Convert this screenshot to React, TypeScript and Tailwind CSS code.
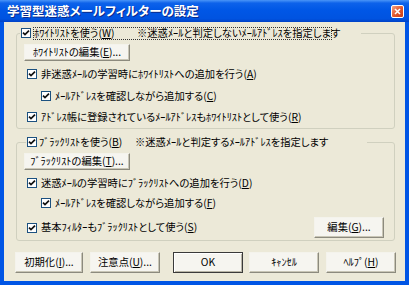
import type { ReactNode } from 'react';

function Check() {
  return (
    <span className="flex h-[10px] w-[10px] shrink-0 items-center justify-center border border-[#1c5180] bg-white">
      <svg viewBox="0 0 8 8" className="h-[8px] w-[8px]">
        <path d="M1 3.6 L3 5.6 L7 1.6" stroke="#111" strokeWidth="1.7" fill="none" />
      </svg>
    </span>
  );
}

function Row({ indent, children }: { indent: string; children: ReactNode }) {
  return (
    <div className={`flex h-[14px] items-center ${indent}`}>
      <Check />
      <span className="ml-[4px] whitespace-nowrap">{children}</span>
    </div>
  );
}

function Btn({ children, className = '', isDefault = false }: { children: ReactNode; className?: string; isDefault?: boolean }) {
  const edge = isDefault
    ? 'border border-[#3a3a3a] shadow-[inset_1px_1px_0_#ffffff,inset_-1px_-1px_0_#b8b5a6]'
    : 'border border-t-[#f4f3ec] border-l-[#f4f3ec] border-b-[#8c8a7e] border-r-[#8c8a7e] shadow-[inset_-1px_-1px_0_#c9c6b6]';
  return (
    <div className={`flex shrink-0 items-center justify-center whitespace-nowrap bg-[#f6f5f0] ${edge} ${className}`}>
      {children}
    </div>
  );
}

function U({ children }: { children: ReactNode }) {
  return <span className="underline underline-offset-1">{children}</span>;
}

export default function App() {
  return (
    <div className="flex h-[285px] w-[409px] flex-col overflow-hidden bg-[#0055e5] font-['Noto_Sans_CJK_JP',sans-serif] text-[10.3px] leading-none text-black [font-feature-settings:'palt']">
      {/* title bar */}
      <div className="flex h-[22px] shrink-0 items-center justify-between bg-[linear-gradient(180deg,#4a95f8_0%,#0d62ea_14%,#0057e6_45%,#0053e0_85%,#0041c6_100%)] pl-[7px] pr-[5px]">
        <span className="whitespace-nowrap text-[12.5px] font-bold text-white [text-shadow:1px_1px_0_#0a2a8c]">
          学習型迷惑メールフィルターの設定
        </span>
        <span className="flex h-[13px] w-[13px] items-center justify-center rounded-[2px] border border-white bg-[linear-gradient(135deg,#f3a386,#e25a30_50%,#c43c19)]">
          <svg viewBox="0 0 7 7" className="h-[7px] w-[7px]">
            <path d="M1 1L6 6M6 1L1 6" stroke="white" strokeWidth="1.6" />
          </svg>
        </span>
      </div>

      {/* client area */}
      <div className="mx-[4px] mb-[4px] flex flex-1 flex-col bg-[#ece9d8] pl-[12px] pr-[10px] pt-[11px]">
        {/* whitelist group */}
        <div className="relative flex h-[96px] w-[379px] flex-col rounded-[3px] border border-[#d0d0bf] pt-[10px]">
          <div className="absolute left-[3px] top-[-8px] flex h-[14px] w-[341px] items-center bg-[#ece9d8] pl-[1px]">
            <Check />
            <span className="ml-[2px] flex h-[13px] w-[299px] shrink-0 items-center whitespace-nowrap border border-dotted border-[#333]">
              <span className="inline-block w-[103px] shrink-0">
                ﾎﾜｲﾄﾘｽﾄを使う(<U>W</U>)
              </span>
              <span className="shrink-0">※迷惑ﾒｰﾙと判定しないﾒｰﾙｱﾄﾞﾚｽを指定します</span>
            </span>
          </div>
          <Btn className="ml-[7px] h-[17px] w-[106px]">
            ﾎﾜｲﾄﾘｽﾄの編集(<U>E</U>)...
          </Btn>
          <div className="mt-[6px]">
            <Row indent="ml-[10px]">
              非迷惑ﾒｰﾙの学習時にﾎﾜｲﾄﾘｽﾄへの追加を行う(<U>A</U>)
            </Row>
          </div>
          <div className="mt-[8px]">
            <Row indent="ml-[24px]">
              ﾒｰﾙｱﾄﾞﾚｽを確認しながら追加する(<U>C</U>)
            </Row>
          </div>
          <div className="mt-[7px]">
            <Row indent="ml-[10px]">
              ｱﾄﾞﾚｽ帳に登録されているﾒｰﾙｱﾄﾞﾚｽもﾎﾜｲﾄﾘｽﾄとして使う(<U>R</U>)
            </Row>
          </div>
        </div>

        {/* blacklist group */}
        <div className="relative mt-[13px] flex h-[99px] w-[379px] flex-col rounded-[3px] border border-[#d0d0bf] pt-[10px]">
          <div className="absolute left-[9px] top-[-8px] flex h-[14px] w-[341px] items-center bg-[#ece9d8] pl-[1px]">
            <Check />
            <span className="ml-[2px] flex shrink-0 items-center whitespace-nowrap">
              <span className="inline-block w-[96px] shrink-0">
                ﾌﾞﾗｯｸﾘｽﾄを使う(<U>B</U>)
              </span>
              <span className="shrink-0">※迷惑ﾒｰﾙと判定するﾒｰﾙｱﾄﾞﾚｽを指定します</span>
            </span>
          </div>
          <Btn className="ml-[7px] h-[17px] w-[106px]">
            ﾌﾞﾗｯｸﾘｽﾄの編集(<U>T</U>)...
          </Btn>
          <div className="mt-[6px]">
            <Row indent="ml-[10px]">
              迷惑ﾒｰﾙの学習時にﾌﾞﾗｯｸﾘｽﾄへの追加を行う(<U>D</U>)
            </Row>
          </div>
          <div className="mt-[6px]">
            <Row indent="ml-[24px]">
              ﾒｰﾙｱﾄﾞﾚｽを確認しながら追加する(<U>F</U>)
            </Row>
          </div>
          <div className="mt-[7px] flex h-[21px] items-center justify-between">
            <Row indent="ml-[10px]">
              基本ﾌｨﾙﾀｰもﾌﾞﾗｯｸﾘｽﾄとして使う(<U>S</U>)
            </Row>
            <Btn className="mr-[10px] h-[21px] w-[70px]">
              編集(<U>G</U>)...
            </Btn>
          </div>
        </div>

        {/* dialog buttons */}
        <div className="-ml-px mt-[11px] flex h-[21px]">
          <Btn className="h-[21px] w-[68px]">
            初期化(<U>I</U>)...
          </Btn>
          <Btn className="ml-[7px] h-[21px] w-[70px]">
            注意点(<U>U</U>)...
          </Btn>
          <Btn isDefault className="ml-[13px] h-[21px] w-[70px]">
            OK
          </Btn>
          <Btn className="ml-[6px] h-[21px] w-[70px]">ｷｬﾝｾﾙ</Btn>
          <Btn className="ml-[7px] h-[21px] w-[70px]">
            ﾍﾙﾌﾟ(<U>H</U>)
          </Btn>
        </div>
      </div>
    </div>
  );
}
